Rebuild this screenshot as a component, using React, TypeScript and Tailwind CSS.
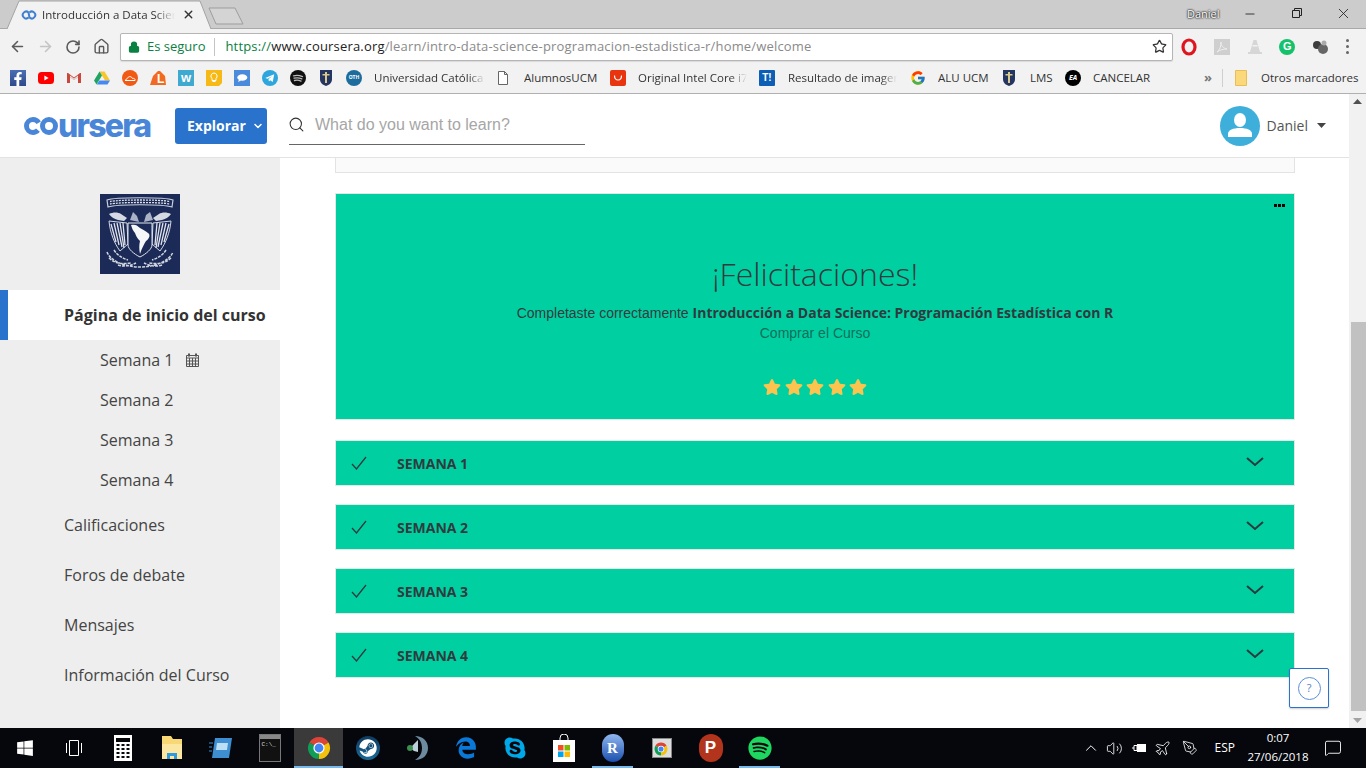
import { ArrowLeft, ArrowRight, RotateCw, Home, Star, Search, ChevronUp, Volume2, Plane, PenTool, MessageSquare, Lock, X, Minus, ChevronDown } from "lucide-react";
import { FaStar, FaFacebookF, FaSteam, FaEdgeLegacy, FaSkype, FaSpotify, FaWindows } from "react-icons/fa";
import { FcGoogle } from "react-icons/fc";

const open = "font-['Open_Sans',sans-serif]";
const liberation = "font-['Liberation_Sans',sans-serif]";

const ChromeLogo = ({ size = 24 }: { size?: number }) => (
  <svg width={size} height={size} viewBox="0 0 24 24">
    <path d="M12 12L2.47 6.5A11 11 0 0 1 21.53 6.5Z" fill="#db4437" />
    <path d="M12 12L21.53 6.5A11 11 0 0 1 12 23Z" fill="#f4c20d" />
    <path d="M12 12L12 23A11 11 0 0 1 2.47 6.5Z" fill="#0f9d58" />
    <circle cx="12" cy="12" r="5.6" fill="#fff" />
    <circle cx="12" cy="12" r="4.4" fill="#4285f4" />
  </svg>
);

const Shield = () => (
  <svg width="16" height="18" viewBox="0 0 16 18">
    <path d="M2 1h12v9c0 4-3 6-6 7-3-1-6-3-6-7z" fill="#24365f" />
    <path d="M7 3h2v11H7zM4.5 5h7v1.6h-7z" fill="#d8c98d" />
  </svg>
);

const Fade = "[mask-image:linear-gradient(to_right,black_85%,transparent)]";

const marks: { icon?: React.ReactNode; text?: string; w?: number; fade?: boolean; ml?: string }[] = [
  { icon: <span className="flex size-4 items-end justify-center bg-gradient-to-b from-[#4a6fb5] to-[#2f4a8a]"><FaFacebookF className="size-[14px] text-white" /></span> },
  { icon: <svg width="16" height="16" viewBox="0 0 16 16"><rect y="2" width="16" height="12" rx="3.5" fill="#f00" /><path d="M6.4 5.4l4.2 2.6-4.2 2.6z" fill="#fff" /></svg> },
  { icon: <svg width="16" height="16" viewBox="0 0 16 16"><path d="M1 3v10h3V7l4 3 4-3v6h3V3h-1L8 7.5 2 3z" fill="#c9473c" /><path d="M4 7l4 3 4-3V5.5L8 8.5 4 5.5z" fill="#e8e2dc" /></svg> },
  { icon: <svg width="16" height="16" viewBox="0 0 16 16"><path d="M5.5 1.5h5L16 10.500h-5z" fill="#f7c62f" /><path d="M5.500 1.500L0 10.500l2.500 4L8 5.500z" fill="#1fa463" /><path d="M5.300 10.500H16l-2.500 4H2.800z" fill="#4688f1" /></svg> },
  { icon: <svg width="16" height="16" viewBox="0 0 16 16"><circle cx="8" cy="8" r="8" fill="#f15a14" /><path d="M3 10.500h10c.5-1.500-1-2.500-2.500-2-.6-1.800-3-2.500-4.200-1.200L3 10.500z" fill="none" stroke="#fff" strokeWidth="1" /></svg> },
  { icon: <span className="relative flex size-4 items-center justify-center"><svg width="16" height="16" viewBox="0 0 16 16"><path d="M0 15L3 6l5-5 2 0 5 5 1 9z" fill="#f26a21" /></svg><span className={`absolute left-[7px] top-[3px] ${liberation} text-[12px] font-bold leading-none text-white`}>L</span></span> },
  { icon: <span className={`flex size-4 items-center justify-center bg-[#3fa9d0] ${liberation} text-[13px] font-bold leading-none text-white`}>w</span> },
  { icon: <svg width="16" height="16" viewBox="0 0 16 16"><path d="M0 0h16v13l-3 3H0z" fill="#f6b916" /><path d="M8 3a3.200 3.200 0 0 0-2 5.600V10.500h4V8.600A3.200 3.200 0 0 0 8 3zM6.500 11.500h3" fill="none" stroke="#fff" strokeWidth="1" /></svg> },
  { icon: <svg width="16" height="16" viewBox="0 0 16 16"><rect width="16" height="16" fill="#4a8bdc" /><ellipse cx="8.300" cy="7.500" rx="5" ry="3.300" fill="#fff" /><path d="M5 9.500l-1 2.500 3-1.500z" fill="#fff" /></svg> },
  { icon: <svg width="16" height="16" viewBox="0 0 16 16"><circle cx="8" cy="8" r="8" fill="#2ea6dd" /><path d="M3.200 8l9-3.800-1.500 7.800-2.500-1.800-1.300 1.300-.4-2.500 4-3-5 2.700z" fill="#fff" /></svg> },
  { icon: <svg width="16" height="16" viewBox="0 0 16 16"><circle cx="8" cy="8" r="8" fill="#111" /><path d="M3.500 5.800c3-.8 6-.6 9 .8M4 8.200c2.700-.7 5.300-.5 7.800.7M4.500 10.500c2.200-.5 4.400-.4 6.500.6" fill="none" stroke="#bbb" strokeWidth="1.300" strokeLinecap="round" /></svg> },
  { icon: <Shield /> },
  { icon: <span className="flex size-4 items-center justify-center rounded-full bg-[#1d6c9e] text-[5px] font-bold leading-none text-white">OTH</span> },
  { text: "Universidad Católica", w: 111, fade: true },
  { icon: <svg width="16" height="16" viewBox="0 0 16 16"><path d="M3.500 1.500h6l3 3v10h-9zM9.500 1.500v3h3" fill="#fff" stroke="#666" /></svg>, ml: "ml-[-2px]" },
  { text: "AlumnosUCM", w: 73, ml: "ml-[1px]" },
  { icon: <span className="flex size-4 items-center justify-center rounded-[2px] bg-[#e8340f]"><svg width="10" height="8" viewBox="0 0 10 8"><path d="M1.500 1.500c0 6 7 6 7 0" fill="none" stroke="#fff" strokeWidth="1.200" /></svg></span>, ml: "ml-[1px]" },
  { text: "Original Intel Core i7", w: 109, fade: true },
  { icon: <span className={`flex size-4 items-center justify-center rounded-[1px] bg-[#0c5fb5] ${liberation} text-[10px] font-bold leading-none text-white`}>T!</span> },
  { text: "Resultado de imagen", w: 109, fade: true, ml: "ml-[1px]" },
  { icon: <FcGoogle className="size-4" />, ml: "ml-[1px]" },
  { text: "ALU UCM", w: 51 },
  { icon: <Shield /> },
  { text: "LMS", w: 23, ml: "ml-[1px]" },
  { icon: <span className="flex size-4 items-center justify-center rounded-full bg-black text-[7px] font-bold italic leading-none text-white">EA</span> },
  { text: "CANCELAR", w: 59 },
];

const sub = ["Semana 1", "Semana 2", "Semana 3", "Semana 4"];
const links = ["Calificaciones", "Foros de debate", "Mensajes", "Información del Curso"];

const TabStrip = () => (
  <div className="relative flex h-[29px] border-b border-[#a9a9a9] bg-[#cccccc]">
    <div className="relative ml-[7px] flex h-[29px] w-[205px] items-center pl-[14px]">
      <svg className="absolute inset-0" width="205" height="29" viewBox="0 0 205 29">
        <path d="M0 29L12 1H193L204 29" fill="#f2f2f2" stroke="#a3a3a3" />
      </svg>
      <svg className="relative" width="16" height="10" viewBox="0 0 16 10">
        <path d="M7.500 2.500A3.400 3.400 0 1 0 7.500 7.500M8.500 2.500A3.400 3.400 0 1 1 8.500 7.500M8.500 7.500L7.500 2.500" fill="none" stroke="#3f80d0" strokeWidth="2" />
      </svg>
      <span className={`relative ml-[5px] w-[133px] overflow-hidden whitespace-nowrap ${open} text-[11.5px] text-[#333] ${Fade}`}>Introducción a Data Scien</span>
      <X className="relative ml-[7px] size-[13px] text-[#333]" strokeWidth={2.500} />
    </div>
    <svg className="ml-[-4px] mt-[7px]" width="36" height="18" viewBox="0 0 36 18">
      <path d="M1 1H27L35 17H8Z" fill="#d4d4d4" stroke="#9d9d9d" />
    </svg>
    <span className={`absolute left-[1187px] top-[6px] ${open} text-[11px] text-white [text-shadow:0_0_2px_#000,0_0_2px_#000]`}>Daniel</span>
    <Minus className="absolute left-[1243px] top-[7px] size-[14px] text-[#222]" strokeWidth={1.500} />
    <svg className="absolute left-[1291px] top-[7px]" width="12" height="12" viewBox="0 0 12 12"><path d="M1.500 3.500h7v7h-7zM3.500 3.500v-2h7v7h-2" fill="none" stroke="#222" /></svg>
    <X className="absolute left-[1335px] top-[5px] size-[17px] text-[#222]" strokeWidth={1.200} />
  </div>
);

const Toolbar = () => (
  <div className="flex h-[35px] items-center bg-[#f2f2f2] pl-[9px]">
    <ArrowLeft className="size-[17px] text-[#5a5a5a]" strokeWidth={2.200} />
    <ArrowRight className="ml-[11px] size-[17px] text-[#c4c4c4]" strokeWidth={2.200} />
    <RotateCw className="ml-[11px] size-[16px] text-[#5a5a5a]" strokeWidth={2.400} />
    <Home className="ml-[12px] size-[17px] text-[#5a5a5a]" strokeWidth={2} />
    <div className="ml-[10px] flex h-[28px] w-[1053px] items-center rounded-[2px] border border-[#b5b5b5] bg-white pl-[7px] shadow-[0_1px_1px_rgba(0,0,0,0.1)]">
      <Lock className="size-[12px] fill-[#0b8043] text-[#0b8043]" strokeWidth={2.500} />
      <span className={`ml-[7px] ${open} text-[13px] text-[#0b8043]`}>Es seguro</span>
      <span className="ml-[9px] h-[18px] w-px bg-[#c4c4c4]" />
      <span className={`ml-[10px] whitespace-nowrap ${open} text-[13px] tracking-[0.0135em] text-[#8a8a8a]`}>
        <span className="text-[#0b8043]">https://</span>
        <span className="text-[#222]">www.coursera.org</span>/learn/intro-data-science-programacion-estadistica-r/home/welcome
      </span>
      <Star className="ml-auto mr-[5px] size-[15px] text-[#333]" strokeWidth={2} />
    </div>
    <div className="ml-[8px] flex w-[184px] items-center justify-between pr-[16px]">
      <svg width="16" height="18" viewBox="0 0 16 18"><ellipse cx="8" cy="9" rx="6" ry="7" fill="none" stroke="#e0141e" strokeWidth="3.200" /></svg>
      <svg width="16" height="16" viewBox="0 0 16 16"><rect width="16" height="16" fill="#cfcfcf" /><path d="M3 13c3-2 4-6 4-10 0 4 2 6 6 7-4 0-7 1-10 3z" fill="none" stroke="#eee" /></svg>
      <svg width="16" height="16" viewBox="0 0 16 16"><path d="M6.500 1h3l3.500 12h2v2H1v-2h2z" fill="#d6d6d6" /><path d="M5.500 6h5v1.500h-5z" fill="#f2f2f2" /></svg>
      <span className={`flex size-4 items-center justify-center rounded-full bg-[#15c26b] ${liberation} text-[11px] font-bold leading-none text-white`}>G</span>
      <svg width="17" height="16" viewBox="0 0 17 16"><circle cx="5" cy="6" r="4" fill="#3d3d3d" /><circle cx="11" cy="10" r="5" fill="#666" /><circle cx="12" cy="4" r="2.500" fill="#aaa" /></svg>
      <span className="flex flex-col gap-[3px]">
        <span className="size-[3px] rounded-full bg-[#666]" />
        <span className="size-[3px] rounded-full bg-[#666]" />
        <span className="size-[3px] rounded-full bg-[#666]" />
      </span>
    </div>
  </div>
);

const Bookmarks = () => (
  <div className="flex h-[30px] items-center gap-3 border-b border-[#b0b0b0] bg-[#f2f2f2] pb-[2px] pl-[10px]">
    {marks.map((m, i) =>
      m.icon ? (
        <span key={i} className={`flex size-4 shrink-0 items-center justify-center ${m.ml ?? ""}`}>{m.icon}</span>
      ) : (
        <span
          key={i}
          style={{ width: m.w }}
          className={`shrink-0 overflow-hidden whitespace-nowrap ${open} text-[11.5px] text-[#333] ${m.ml ?? ""} ${m.fade ? Fade : ""}`}
        >
          {m.text}
        </span>
      ),
    )}
    <span className={`ml-[40px] ${open} text-[13px] font-bold text-[#777]`}>»</span>
    <span className="ml-[-2px] h-[18px] w-px bg-[#cfcfcf]" />
    <svg width="12" height="16" viewBox="0 0 12 16"><path d="M.5.5h11v15H.5z" fill="#fbd97a" stroke="#e9bf54" /></svg>
    <span className={`ml-[2px] whitespace-nowrap ${open} text-[11.5px] text-[#333]`}>Otros marcadores</span>
  </div>
);

const Crest = () => (
  <svg width="80" height="80" viewBox="0 0 80 80">
    <rect width="80" height="80" fill="#1b2a57" />
    <path d="M7 6c8-3 58-3 66 0l-1 7c-10-3-54-3-64 0z" fill="none" stroke="#c9cfdc" strokeWidth="1.200" />
    <path d="M10 7.500c10-2 50-2 60 0M10 10c10-2 50-2 60 0" fill="none" stroke="#dfe2ea" strokeWidth="1.300" strokeDasharray="2 1" />
    <path d="M30 26l3-8 4 4 2 6zM44 28l2-7 4-3 3 8z" fill="#aab2c6" />
    <path d="M9 20c4-2 9-2 12 0l6 4-3 3-6-1c-4-1-7-3-9-6zM71 20c-4-2-9-2-12 0l-6 4 3 3 6-1c4-1 7-3 9-6z" fill="#d5d9e3" />
    <path d="M9 27l18 2 1 21-8 7C14 49 10 38 9 27zM71 27l-18 2-1 21 8 7c6-8 10-19 11-30z" fill="none" stroke="#d5d9e3" strokeWidth="1" />
    <path d="M11 30l5 18M14 29l5 22M17 29l5 24M20 29l4 25M23 29l2 22M69 30l-5 18M66 29l-5 22M63 29l-5 24M60 29l-4 25M57 29l-2 22" stroke="#dfe2ea" strokeWidth="1.300" />
    <path d="M28 29h24v22c0 4-6 9-12 12-6-3-12-8-12-12z" fill="#1b2a57" stroke="#e5e7ee" />
    <path d="M31 31c4-1 6 0 9 3 3 2 6 3 8 5 3 2 1 6-2 8-2 3-4 7-6 13-1-5-1-9 0-13-3-3-4-5-5-8-2-2-3-5-4-8z" fill="#f6f7f9" />
    <path d="M7 58c3 8 16 15 33 15s30-7 33-15M9 64c6 6 14 6 22 5M71 64c-6 6-14 6-22 5M14 56c3 5 8 8 14 10M66 56c-3 5-8 8-14 10M18 71c6 2 12 1 18-2M62 71c-6 2-12 1-18-2" fill="none" stroke="#d0d5e0" strokeWidth="1.500" strokeDasharray="3 1" />
  </svg>
);

const CalendarIcon = () => (
  <svg className="ml-[13px]" width="13" height="14" viewBox="0 0 13 14">
    <path d="M.5 2.500h12v11H.5zM.5 5h12M.5 8h12M.5 11h12M3.500 5v8.500M6.500 5v8.500M9.500 5v8.500" fill="none" stroke="#555" />
    <path d="M3 .5v3M10 .5v3" stroke="#555" strokeWidth="2" />
  </svg>
);

const Sidebar = () => (
  <aside className={`flex w-[280px] shrink-0 flex-col bg-[#eeeeee] pt-[36px] ${open} text-[16px] text-[#444]`}>
    <div className="flex justify-center"><Crest /></div>
    <div className="mt-[16px] flex h-[50px] items-center border-l-[8px] border-[#2a73cc] bg-white pl-[56px] font-bold text-[#333]">Página de inicio del curso</div>
    {sub.map((s, i) => (
      <div key={s} className="flex h-[40px] items-center pl-[100px]">
        {s}
        {i === 0 && <CalendarIcon />}
      </div>
    ))}
    {links.map((l) => (
      <div key={l} className="flex h-[50px] items-center pl-[64px]">{l}</div>
    ))}
  </aside>
);

const Chevron = () => (
  <svg className="mb-[2px] mr-[30px]" width="18" height="10" viewBox="0 0 18 10">
    <path d="M1 1l8 7 8-7" fill="none" stroke="#2b3a3d" strokeWidth="2" />
  </svg>
);

const WeekRow = ({ title }: { title: string }) => (
  <div className="flex h-[44px] items-center bg-[#00d0a1] shadow-[0_0_0_1px_#e6e6e6]">
    <svg className="ml-[15px]" width="16" height="14" viewBox="0 0 16 14">
      <path d="M1 8l4.500 5L15 1" fill="none" stroke="#2b3a3d" strokeWidth="1.300" />
    </svg>
    <span className="ml-[30px] flex-1 pt-px text-[14px] font-bold text-[#2f3b3f]">{title}</span>
    <Chevron />
  </div>
);

const Main = () => (
  <main className={`min-w-0 flex-1 pl-[56px] pr-[55px] ${open}`}>
    <div className="-mx-px h-[15px] border-x border-b border-[#e3e3e3] bg-[#fafafa]" />
    <section className="relative mt-[21px] flex h-[225px] flex-col items-center bg-[#00d0a1] pt-[60px] text-[#2f3b3f] shadow-[0_0_0_1px_#e6e6e6]">
      <span className="absolute right-[9px] top-[10px] flex gap-px">
        <i className="size-[3px] bg-black" />
        <i className="size-[3px] bg-black" />
        <i className="size-[3px] bg-black" />
      </span>
      <h1 className="text-[32px] font-light leading-[40px]">¡Felicitaciones!</h1>
      <p className={`mt-[9px] text-[14px] leading-[20px] ${liberation}`}>
        Completaste correctamente <b className={`${open} font-bold`}>Introducción a Data Science: Programación Estadística con R</b>
      </p>
      <p className={`text-[14px] leading-[20px] text-[#0e6f5c] ${liberation}`}>Comprar el Curso</p>
      <div className="mt-[35px] flex gap-[3.5px]">
        {[0, 1, 2, 3, 4].map((i) => <FaStar key={i} className="size-[18px] text-[#fcc44f]" />)}
      </div>
    </section>
    <div className="mt-[22px] flex flex-col gap-[20px]">
      {["SEMANA 1", "SEMANA 2", "SEMANA 3", "SEMANA 4"].map((t) => <WeekRow key={t} title={t} />)}
    </div>
  </main>
);

const Header = () => (
  <header className="flex h-[64px] shrink-0 items-center border-b border-[#e3e3e3] bg-white pl-[24px]">
    <div className="flex w-[151px] items-center">
      <svg width="36" height="18" viewBox="0 0 36 18">
        <circle cx="9" cy="9" r="6.500" fill="none" stroke="#4a86d8" strokeWidth="5" strokeDasharray="32 9" strokeDashoffset="-4.500" />
        <circle cx="25" cy="9" r="6.500" fill="none" stroke="#4a86d8" strokeWidth="5" />
      </svg>
      <span className="ml-[-2px] font-['Inter',sans-serif] text-[32px] font-extrabold leading-none tracking-[-0.055em] text-[#4a86d8]">ursera</span>
    </div>
    <button className={`flex h-[36px] w-[92px] items-center gap-[6px] rounded-[3px] bg-[#2a73cc] pl-[12px] ${open} text-[14px] font-bold text-white`}>
      Explorar <ChevronDown className="size-[12px]" strokeWidth={3} />
    </button>
    <div className="ml-[22px] flex h-[38px] w-[296px] items-center border-b border-[#666] pb-px">
      <Search className="ml-[-1px] size-[17px] text-[#333]" strokeWidth={1.500} />
      <span className={`ml-[10px] ${liberation} text-[16px] text-[#a6a6a6]`}>What do you want to learn?</span>
    </div>
    <div className={`ml-auto mr-[23px] flex items-center ${open} text-[14px] text-[#555]`}>
      <svg width="40" height="40" viewBox="0 0 40 40">
        <circle cx="20" cy="20" r="20" fill="#3eafdb" />
        <ellipse cx="20" cy="14" rx="6" ry="7" fill="#fff" />
        <path d="M8 31v-3c0-4 5-6 12-6s12 2 12 6v3z" fill="#fff" />
      </svg>
      <span className="ml-[7px]">Daniel</span>
      <svg className="ml-[9px]" width="9" height="5" viewBox="0 0 9 5"><path d="M0 0h9L4.500 5z" fill="#444" /></svg>
    </div>
  </header>
);

const Scrollbar = () => (
  <div className="relative flex w-[17px] shrink-0 flex-col items-center justify-between bg-[#f1f1f1] py-[5px]">
    <svg width="9" height="5" viewBox="0 0 9 5"><path d="M0 5h9L4.500 0z" fill="#505050" /></svg>
    <div className="absolute left-[2px] top-[228px] h-[389px] w-[15px] bg-[#c1c1c1]" />
    <svg width="9" height="5" viewBox="0 0 9 5"><path d="M0 0h9L4.500 5z" fill="#a3a3a3" /></svg>
  </div>
);

const taskIcons: { node: React.ReactNode; active?: boolean; line?: boolean }[] = [
  { node: <FaWindows className="size-[18px] text-white" /> },
  { node: <svg width="20" height="16" viewBox="0 0 20 16"><path d="M5.500.5h9v15h-9zM2.500 3v10M17.500 3v10" fill="none" stroke="#fff" /></svg> },
  { node: <svg width="18" height="26" viewBox="0 0 18 26"><rect width="18" height="26" fill="#fff" /><rect x="2" y="3" width="14" height="4" fill="#05070c" /><path d="M2.500 10h3M7.500 10h3M12.500 10h3M2.500 14h3M7.500 14h3M12.500 14h3M2.500 18h3M7.500 18h3M12.500 18h3M2.500 22h3M7.500 22h3M12.500 22h3" stroke="#05070c" strokeWidth="2" /></svg> },
  { node: <svg width="22" height="26" viewBox="0 0 22 26"><path d="M1 1h9l2 3h9v20H1z" fill="#f8d775" /><path d="M1 9h20v15H1z" fill="#fbe7a1" /><path d="M6 24v-6h10v6h-3v-3H9v3z" fill="#2f9ae0" /></svg> },
  { node: <svg width="24" height="22" viewBox="0 0 24 22"><path d="M6 1h17l-3 20H3z" fill="#3d8fd1" /><path d="M8 6h11l-1 7H7z" fill="#bcdff5" /><path d="M0 6h4M0 10h3M0 14h3" stroke="#3d8fd1" /></svg> },
  { node: <span className="flex h-[28px] w-[22px] flex-col border border-[#777] bg-[#111]"><span className="h-[4px] bg-[#888]" /><span className="ml-[2px] mt-[3px] font-['Liberation_Mono',monospace] text-[6px] leading-none text-[#ddd]">C:\_</span></span> },
  { node: <ChromeLogo />, active: true, line: true },
  { node: <span className="flex size-[24px] items-center justify-center rounded-full bg-gradient-to-b from-[#0f3a5e] to-[#1a6a98]"><FaSteam className="size-[18px] text-white" /></span> },
  { node: <svg width="24" height="28" viewBox="0 0 24 28"><path d="M10 2c8 0 13 5 13 12s-5 12-13 12c5-3 7-7 7-12s-2-9-7-12z" fill="#6e8a9e" /><path d="M13 6c-3 3-5 5-8 8l4 3 4 1z" fill="#bcd0dc" /><circle cx="5" cy="14" r="3" fill="#3a8f4e" /></svg> },
  { node: <FaEdgeLegacy className="size-[22px] text-[#0a78d7]" /> },
  { node: <FaSkype className="size-[24px] text-[#00a8e8]" /> },
  { node: <svg width="22" height="28" viewBox="0 0 22 28"><path d="M7 7V4a4 4 0 0 1 8 0v3" fill="none" stroke="#fff" /><rect y="6" width="22" height="22" fill="#fff" /><rect x="5" y="11" width="5.500" height="5.500" fill="#f25022" /><rect x="11.500" y="11" width="5.500" height="5.500" fill="#7fba00" /><rect x="5" y="17.500" width="5.500" height="5.500" fill="#00a4ef" /><rect x="11.500" y="17.500" width="5.500" height="5.500" fill="#ffb900" /></svg> },
  { node: <span className={`flex h-[28px] w-[22px] items-center justify-center rounded-full bg-gradient-to-b from-[#8fb6ee] to-[#1c4fae] font-['Liberation_Serif',serif] text-[15px] font-bold text-white`}>R</span>, line: true },
  { node: <span className="relative block h-[20px] w-[20px] border border-[#888] bg-[#ddd]"><span className="absolute left-[1px] top-[3px]"><ChromeLogo size={14} /></span></span> },
  { node: <span className={`flex h-[28px] w-[24px] items-center justify-center rounded-full bg-[#b3341c] ${liberation} text-[17px] font-bold text-white`}>P</span> },
  { node: <FaSpotify className="size-[24px] text-[#1ed760]" />, line: true },
];

const Taskbar = () => (
  <footer className="flex h-[40px] shrink-0 items-stretch bg-[#05070c] text-white">
    {taskIcons.map((t, i) => (
      <div key={i} className={`relative flex w-[49px] shrink-0 items-center justify-center ${t.active ? "bg-[#3a3a3a]" : ""}`}>
        {t.node}
        {t.line && <span className={`absolute bottom-0 h-[2px] bg-[#76b9ed] ${t.active ? "inset-x-0" : "inset-x-[4px]"}`} />}
      </div>
    ))}
    <div className={`ml-auto flex items-center pr-[24px] ${open} text-[11.5px]`}>
      <ChevronUp className="size-[18px]" strokeWidth={1.300} />
      <Volume2 className="ml-[6px] size-[17px]" strokeWidth={1.200} />
      <svg className="ml-[8px]" width="16" height="10" viewBox="0 0 16 10"><path d="M1 5h2M3 2.500h3v5H3z" fill="none" stroke="#fff" /><rect x="6" y="1" width="9" height="8" fill="#fff" /></svg>
      <Plane className="ml-[7px] size-[17px]" strokeWidth={1.200} />
      <PenTool className="ml-[11px] size-[16px]" strokeWidth={1.200} />
      <span className="ml-[17px] text-[12px]">ESP</span>
      <span className="ml-[11px] flex w-[64px] flex-col items-center pb-[2px] leading-[19px]">
        <span>0:07</span>
        <span>27/06/2018</span>
      </span>
      <MessageSquare className="ml-[14px] size-[18px]" strokeWidth={1.200} />
    </div>
  </footer>
);

const App = () => (
  <div className="flex h-[768px] w-[1366px] flex-col overflow-hidden bg-white">
    <TabStrip />
    <Toolbar />
    <Bookmarks />
    <div className="flex min-h-0 flex-1">
      <div className="relative flex min-w-0 flex-1 flex-col">
        <Header />
        <div className="flex min-h-0 flex-1">
          <Sidebar />
          <Main />
        </div>
        <button className="absolute left-[1289px] top-[574px] flex size-[40px] items-center justify-center rounded-[2px] border border-[#2a73cc] bg-white shadow-[0_1px_2px_rgba(0,0,0,0.2)]">
          <span className="flex size-[23px] items-center justify-center rounded-full border border-[#5b8fd8] font-['Open_Sans',sans-serif] text-[11px] text-[#5b7fb8]">?</span>
        </button>
      </div>
      <Scrollbar />
    </div>
    <Taskbar />
  </div>
);

export default App;
